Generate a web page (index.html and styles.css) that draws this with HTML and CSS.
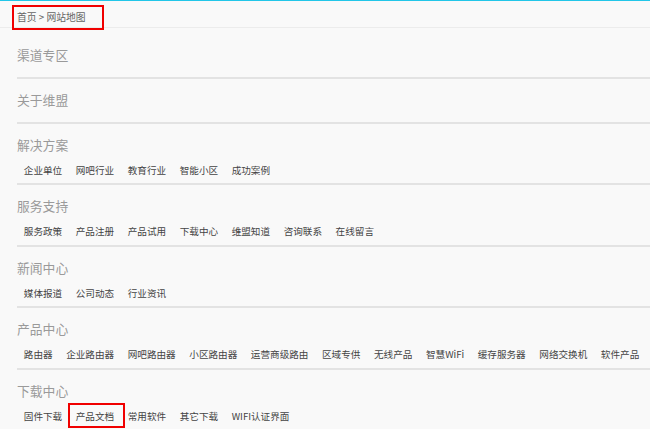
FILE: index.html
```html
<!DOCTYPE html>
<html lang="zh-CN">
<head>
<meta charset="utf-8">
<title>网站地图</title>
<link rel="stylesheet" href="styles.css">
</head>
<body>
<div class="topline"></div>
<div class="crumbbar">
  <div class="crumb"><a href="#">首页</a> &gt; <span>网站地图</span></div>
</div>
<div class="sitemap">
  <section class="group empty">
    <h2>渠道专区</h2>
  </section>
  <section class="group empty">
    <h2>关于维盟</h2>
  </section>
  <section class="group">
    <h2>解决方案</h2>
    <ul class="links">
      <li><a href="#">企业单位</a></li>
      <li><a href="#">网吧行业</a></li>
      <li><a href="#">教育行业</a></li>
      <li><a href="#">智能小区</a></li>
      <li><a href="#">成功案例</a></li>
    </ul>
  </section>
  <section class="group">
    <h2>服务支持</h2>
    <ul class="links">
      <li><a href="#">服务政策</a></li>
      <li><a href="#">产品注册</a></li>
      <li><a href="#">产品试用</a></li>
      <li><a href="#">下载中心</a></li>
      <li><a href="#">维盟知道</a></li>
      <li><a href="#">咨询联系</a></li>
      <li><a href="#">在线留言</a></li>
    </ul>
  </section>
  <section class="group">
    <h2>新闻中心</h2>
    <ul class="links">
      <li><a href="#">媒体报道</a></li>
      <li><a href="#">公司动态</a></li>
      <li><a href="#">行业资讯</a></li>
    </ul>
  </section>
  <section class="group">
    <h2>产品中心</h2>
    <ul class="links">
      <li><a href="#">路由器</a></li>
      <li><a href="#">企业路由器</a></li>
      <li><a href="#">网吧路由器</a></li>
      <li><a href="#">小区路由器</a></li>
      <li><a href="#">运营商级路由</a></li>
      <li><a href="#">区域专供</a></li>
      <li><a href="#">无线产品</a></li>
      <li><a href="#">智慧WiFi</a></li>
      <li><a href="#">缓存服务器</a></li>
      <li><a href="#">网络交换机</a></li>
      <li><a href="#">软件产品</a></li>
    </ul>
  </section>
  <section class="group last">
    <h2>下载中心</h2>
    <ul class="links">
      <li><a href="#">固件下载</a></li>
      <li><a href="#" class="marked">产品文档</a></li>
      <li><a href="#">常用软件</a></li>
      <li><a href="#">其它下载</a></li>
      <li><a href="#">WIFI认证界面</a></li>
    </ul>
  </section>
</div>
</body>
</html>
```
FILE: styles.css
```css
html, body {
  margin: 0;
  padding: 0;
  background: #f9f9f9;
  font-family: "Microsoft YaHei", "Noto Sans CJK SC", "Noto Sans", sans-serif;
  overflow: hidden;
}

.topline {
  height: 1px;
  background: #22c6e8;
}

.crumbbar {
  height: 22px;
  padding-top: 4px;
  border-bottom: 1px solid #ececec;
  padding-left: 12px;
}

.crumb {
  box-sizing: border-box;
  width: 92px;
  height: 25px;
  padding-left: 3px;
  border: 2px solid #f00000;
  font-size: 9.8px;
  line-height: 20px;
  color: #666;
  position: relative;
}

.crumb a {
  color: #666;
  text-decoration: none;
}

.sitemap {
  padding-left: 17px;
  margin-top: 6px;
}

.group {
  border-bottom: 2px solid #e3e3e3;
  padding-top: 8px;
  padding-bottom: 1px;
}

.group.empty {
  padding-bottom: 9px;
}

.group.last {
  border-bottom: none;
}

.group h2 {
  margin: 0;
  font-size: 12.8px;
  line-height: 26px;
  font-weight: normal;
  color: #9a9a9a;
}

.links {
  list-style: none;
  margin: 0;
  padding: 0;
  display: flex;
  flex-wrap: wrap;
}

.links li {
  display: block;
}

.links a {
  display: block;
  padding: 0 6.8px;
  font-size: 9.6px;
  line-height: 24.4px;
  color: #444;
  text-decoration: none;
  white-space: nowrap;
}

.links a.marked {
  position: relative;
}

.links a.marked::after {
  content: "";
  position: absolute;
  top: -1px;
  bottom: 0;
  left: -1px;
  right: -4px;
  border: 2px solid #f00000;
}
```
